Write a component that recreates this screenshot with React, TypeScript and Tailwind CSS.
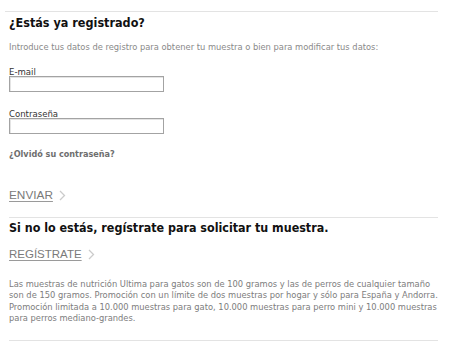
import React from "react";

function Chevron() {
  return (
    <svg width="7" height="11" viewBox="0 0 7 11" className="ml-[6px] mt-[1px]">
      <polyline points="1,1 5.5,5.5 1,10" fill="none" stroke="#cbcbcb" strokeWidth="1.3" />
    </svg>
  );
}

export default function App() {
  return (
    <div className="w-[450px] h-[352px] bg-white overflow-hidden font-['DejaVu_Sans_Condensed','DejaVu_Sans',sans-serif] [font-stretch:condensed]">
      <div className="h-[11px]" />
      <div className="ml-[5px] w-[433px] h-px bg-[#e3e3e3]" />
      <div className="pl-[9px] w-[438px]">
        <h1 className="mt-px text-[12.5px] leading-[20px] font-bold text-[#111]">¿Estás ya registrado?</h1>
        <p className="mt-[8px] text-[9.25px] leading-[12px] text-[#8a8a8a] whitespace-nowrap">
          Introduce tus datos de registro para obtener tu muestra o bien para modificar tus datos:
        </p>
        <label className="block mt-[14px] text-[9.5px] leading-[9px] text-[#333]">E-mail</label>
        <div className="w-[155px] h-[16px] border border-[#a3a3a3] shadow-[inset_1px_1px_0_#e4e4e4]" />
        <label className="block mt-[17px] text-[9.5px] leading-[9px] text-[#333]">Contraseña</label>
        <div className="w-[155px] h-[16px] border border-[#a3a3a3] shadow-[inset_1px_1px_0_#e4e4e4]" />
        <p className="mt-[14px] text-[9px] leading-[12px] font-bold text-[#6e6e6e]">¿Olvidó su contraseña?</p>
        <div className="mt-[28px] flex items-center h-[14px]">
          <span className="font-['Liberation_Sans',Arial,sans-serif] [font-stretch:normal] text-[11.8px] leading-[14px] text-[#7a7a7a] underline decoration-[#9a9a9a] underline-offset-[2px]">ENVIAR</span>
          <Chevron />
        </div>
        <div className="mt-[15px] w-[429px] h-px bg-[#e3e3e3]" />
        <h2 className="text-[12.4px] leading-[20px] font-bold text-[#111] whitespace-nowrap">Si no lo estás, regístrate para solicitar tu muestra.</h2>
        <div className="mt-[9px] flex items-center h-[14px]">
          <span className="font-['Liberation_Sans',Arial,sans-serif] [font-stretch:normal] text-[11.5px] leading-[14px] text-[#7a7a7a] underline decoration-[#9a9a9a] underline-offset-[2px]">REGÍSTRATE</span>
          <Chevron />
        </div>
        <div className="mt-[17px] text-[9.25px] leading-[11.3px] text-[#7d7d7d] whitespace-nowrap">
          <div>Las muestras de nutrición Ultima para gatos son de 100 gramos y las de perros de cualquier tamaño</div>
          <div>son de 150 gramos. Promoción con un límite de dos muestras por hogar y sólo para España y Andorra.</div>
          <div>Promoción limitada a 10.000 muestras para gato, 10.000 muestras para perro mini y 10.000 muestras</div>
          <div>para perros mediano-grandes.</div>
        </div>
        <div className="mt-[17px] w-[429px] h-px bg-[#e3e3e3]" />
      </div>
    </div>
  );
}
